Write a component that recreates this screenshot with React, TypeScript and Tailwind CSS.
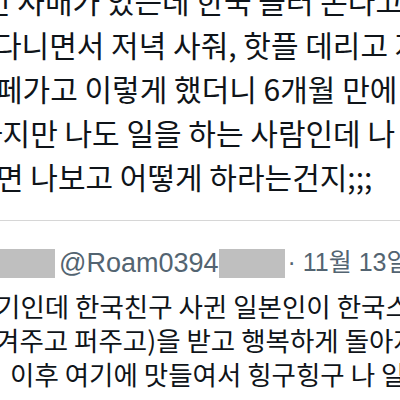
export default function App() {
  const mainLines = [
    { text: "인 사매가 있는데 한국 놀러 온다고", ml: "-ml-[17px]" },
    { text: "다니면서 저녁 사줘, 핫플 데리고 자", ml: "-ml-[6px]" },
    { text: "페가고 이렇게 했더니 6개월 만에", ml: "-ml-[5px]" },
    { text: "하지만 나도 일을 하는 사람인데 나", ml: "-ml-[25px]" },
    { text: "면 나보고 어떻게 하라는건지;;;", ml: "-ml-[4px]" },
  ];

  const replyLines = [
    { text: "기인데 한국친구 사귄 일본인이 한국스", ml: "-ml-[4px]" },
    { text: "겨주고 퍼주고)을 받고 행복하게 돌아자", ml: "-ml-[5px]" },
    { text: "이후 여기에 맛들여서 힝구힝구 나 일본", ml: "ml-[10px]" },
  ];

  return (
    <div className="w-[400px] h-[400px] overflow-hidden bg-white text-[#0f1419] font-['Noto_Sans_CJK_KR',sans-serif]">
      {/* main tweet body */}
      <div className="-mt-[22px] text-[30px] leading-[44px]">
        {mainLines.map((line, i) => (
          <div key={i} className={`whitespace-nowrap ${line.ml}`}>
            {line.text}
          </div>
        ))}
      </div>

      <div className="mt-[22px] h-px bg-[#d6d6d6]" />

      {/* reply */}
      <div className="mt-[27px] flex items-center h-[30px] whitespace-nowrap text-[27px] text-[#536471] font-['Liberation_Sans','Noto_Sans_CJK_KR',sans-serif]">
        <div className="w-[55px] h-[29px] bg-[#bfbfbf] shrink-0" />
        <span className="ml-[4px]">@Roam0394</span>
        <div className="w-[66px] h-[29px] bg-[#bfbfbf] shrink-0" />
        <span className="ml-[3px] text-[25px]">· 11월 13일</span>
      </div>

      <div className="mt-[11px] text-[26.5px] leading-[34px]">
        {replyLines.map((line, i) => (
          <div key={i} className={`whitespace-nowrap ${line.ml}`}>
            {line.text}
          </div>
        ))}
      </div>
    </div>
  );
}
